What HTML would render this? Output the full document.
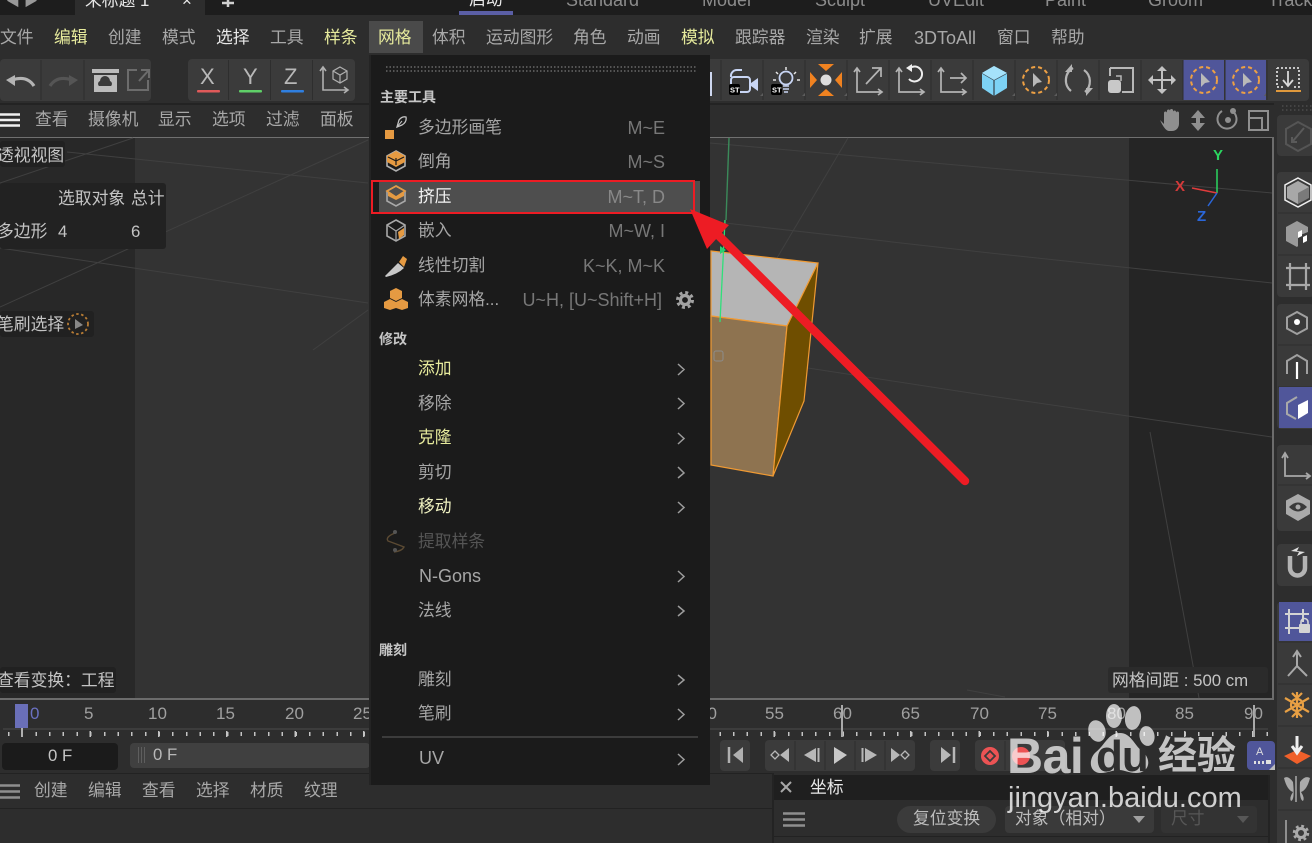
<!DOCTYPE html>
<html lang="zh"><head><meta charset="utf-8"><title>Cinema 4D</title>
<style>
html,body{margin:0;padding:0;background:#2d2d2d;}
#p{position:relative;width:1312px;height:843px;overflow:hidden;background:#2d2d2d;font-family:"Liberation Sans","Noto Sans CJK SC",sans-serif;font-size:16.8px;color:#a8a8a8;}
.b,.t,svg{position:absolute;}
.t{white-space:nowrap;line-height:20px;height:20px;margin-top:3px;}
.y{color:#e6ea9c}.w{color:#e8e8e8}
.m{font-size:16.8px;color:#a6a6a6}
.m.y{color:#e6ea9c}
.h{font-size:14px;font-weight:700;color:#c6c6c6;margin-top:0}
.s{color:#777;text-align:right;right:647px;font-size:18px}
.o{color:#c4c4c4;font-size:16.8px}
.n{color:#a0a0a0;font-size:17px;margin-top:1px}
.l{font-size:18px}
</style></head><body><div id="p">

<!-- top bar -->
<div class="b" style="left:0;top:0;width:1312px;height:15px;background:#1d1d1d"></div>
<div class="b" style="left:75px;top:0;width:130px;height:15px;background:#2d2d2d"></div>
<div class="t w" style="left:85px;top:-12px">未标题 1</div>
<div class="t w" style="left:182px;top:-12px">×</div>
<div class="t" style="left:6px;top:-12px;color:#999;font-size:14px">◀ ▶</div>
<div class="t w" style="left:469px;top:-13px">启动</div>
<div class="b" style="left:459px;top:11px;width:54px;height:4px;background:#5b5fa6"></div>
<div class="t l" style="left:566px;top:-13px;color:#8c8c8c">Standard</div>
<div class="t l" style="left:702px;top:-13px;color:#8c8c8c">Model</div>
<div class="t l" style="left:815px;top:-13px;color:#8c8c8c">Sculpt</div>
<div class="t l" style="left:928px;top:-13px;color:#8c8c8c">UVEdit</div>
<div class="t l" style="left:1045px;top:-13px;color:#8c8c8c">Paint</div>
<div class="t l" style="left:1148px;top:-13px;color:#8c8c8c">Groom</div>
<div class="t l" style="left:1268px;top:-13px;color:#8c8c8c">Track</div>

<!-- menu bar -->
<div class="b" style="left:369px;top:21px;width:54px;height:32px;background:#4a4a4a"></div>
<div class="t" style="left:0;top:25px">文件</div>
<div class="t y" style="left:54px;top:25px">编辑</div>
<div class="t" style="left:108px;top:25px">创建</div>
<div class="t" style="left:162px;top:25px">模式</div>
<div class="t w" style="left:216px;top:25px">选择</div>
<div class="t" style="left:270px;top:25px">工具</div>
<div class="t y" style="left:324px;top:25px">样条</div>
<div class="t y" style="left:378px;top:25px">网格</div>
<div class="t" style="left:432px;top:25px">体积</div>
<div class="t" style="left:486px;top:25px">运动图形</div>
<div class="t" style="left:573px;top:25px">角色</div>
<div class="t" style="left:627px;top:25px">动画</div>
<div class="t y" style="left:681px;top:25px">模拟</div>
<div class="t" style="left:735px;top:25px">跟踪器</div>
<div class="t" style="left:806px;top:25px">渲染</div>
<div class="t" style="left:859px;top:25px">扩展</div>
<div class="t l" style="left:914px;top:25px">3DToAll</div>
<div class="t" style="left:997px;top:25px">窗口</div>
<div class="t" style="left:1051px;top:25px">帮助</div>

<!-- toolbar groups -->
<div class="b" style="left:0;top:59px;width:151px;height:42px;background:#3b3b3b;border-radius:4px"></div>
<div class="b" style="left:188px;top:59px;width:167px;height:42px;background:#3b3b3b;border-radius:4px"></div>
<div class="b" style="left:700px;top:59px;width:609px;height:42px;background:#3b3b3b;border-radius:4px"></div>
<div class="b" style="left:1183px;top:60px;width:41px;height:40px;background:#50569a"></div>
<div class="b" style="left:1225px;top:60px;width:41px;height:40px;background:#50569a"></div>
<div class="t w" style="left:200px;top:64px;font-size:22px;color:#b8b8b8">X</div>
<div class="t w" style="left:243px;top:64px;font-size:22px;color:#b8b8b8">Y</div>
<div class="t w" style="left:284px;top:64px;font-size:22px;color:#b8b8b8">Z</div>

<!-- viewport header -->
<div class="b" style="left:0;top:103px;width:1274px;height:2px;background:#232323"></div>
<div class="t" style="left:35px;top:107px">查看</div>
<div class="t" style="left:88px;top:107px">摄像机</div>
<div class="t" style="left:158px;top:107px">显示</div>
<div class="t" style="left:212px;top:107px">选项</div>
<div class="t" style="left:266px;top:107px">过滤</div>
<div class="t" style="left:320px;top:107px">面板</div>

<!-- viewport -->
<div class="b" style="left:0;top:137px;width:1274px;height:563px;background:#333"></div>
<div class="b" style="left:0;top:138px;width:135px;height:561px;background:#282828"></div>
<div class="b" style="left:1129px;top:138px;width:143px;height:561px;background:#252525"></div>
<div class="b" style="left:0;top:137px;width:1274px;height:1px;background:#707070"></div>
<div class="b" style="left:0;top:698px;width:1274px;height:2px;background:#6c6c6c"></div>
<div class="b" style="left:1272px;top:137px;width:2px;height:563px;background:#6c6c6c"></div>

<svg style="left:0;top:0" width="1312" height="843" viewBox="0 0 1312 843" fill="none">
<g stroke="#404040" stroke-width="1">
<path d="M67 152L368 183M710 143L990 168L1272 193M0 248L368 303M725 223L990 253L1272 283M0 183L133 138M0 307L368 140M313 350L368 310M848 138L777 258M808 368L990 396L1272 437M967 690L1005 697M1150 432L1199 698"/>
</g>
<!-- cube -->
<path d="M711 251L818 263L787 326L711 316Z" fill="#b5b5b5" stroke="#f09a33" stroke-width="1.2"/>
<path d="M711 316L787 326L773 476L711 465Z" fill="#8e7350" stroke="#f09a33" stroke-width="1.2"/>
<path d="M787 326L818 263L804 401L773 476Z" fill="#6f4e00" stroke="#f09a33" stroke-width="1.2"/>
<path d="M729 138L726 220" stroke="#3b8a5a" stroke-width="1.4"/>
<path d="M725 220L720 322" stroke="#2fe07a" stroke-width="1.3"/>
<path d="M724 234l4 10h-7zM720 246l6 4-6 4z" fill="#28d070"/>
<rect x="714" y="351" width="9" height="10" rx="2" stroke="#8c8c8c" stroke-width="1"/>
<!-- gizmo -->
<path d="M1217 193V169" stroke="#2bd660" stroke-width="1.5"/>
<path d="M1217 193L1192 188" stroke="#e03c3c" stroke-width="1.5"/>
<path d="M1217 193L1208 206" stroke="#2a66d8" stroke-width="1.5"/>

<!-- tab plus -->
<path d="M228 0V7M222 3H234" stroke="#d0d0d0" stroke-width="2.500"/>

<!-- toolbar left icons -->
<g stroke="#2e2e2e"><path d="M41 60V100M84 60V100M228.500 60V100M270.500 60V100M312.500 60V100"/></g>
<path d="M6 80L15 75V86Z" fill="#b4b4b4"/><path d="M12 80Q27 75 34 86" stroke="#b4b4b4" stroke-width="3.200"/>
<path d="M78 80L69 75V86Z" fill="#555"/><path d="M72 80Q57 75 50 86" stroke="#555" stroke-width="3.200"/>
<path d="M92 69H119V73H92Z" fill="#bcbcbc"/><path d="M94 75H117V92H94Z" fill="#bcbcbc"/>
<path d="M99 86a3 3 0 0 1 1-5 5 5 0 0 1 10 0 3 3 0 0 1 1 5Z" fill="#3b3b3b"/>
<path d="M137 70H128V90H148V80M139 81L148 71M141 70H149V78" stroke="#6c6c6c" stroke-width="2"/>
<rect x="197" y="90" width="23" height="2.500" rx="1" fill="#e05a5a"/>
<rect x="239" y="90" width="23" height="2.500" rx="1" fill="#5fd068"/>
<rect x="281" y="90" width="23" height="2.500" rx="1" fill="#2f7fe0"/>
<path d="M323 68V90H347M320 71L323 67L326 71M344 87L348 90L344 93" stroke="#b0b0b0" stroke-width="1.600"/>
<path d="M340 67l7 4v8l-7 4-7-4v-8zM333 71l7 4 7-4M340 75v8" stroke="#b0b0b0" stroke-width="1.200"/>

<!-- toolbar right icons -->
<g stroke="#2e2e2e"><path d="M721 60V100M763 60V100M805 60V100M847 60V100M889 60V100M931 60V100M973 60V100M1015 60V100M1057 60V100M1099 60V100M1141 60V100M1183 60V100M1225 60V100M1267 60V100"/></g>
<path d="M711 72V96" stroke="#cfd8f0" stroke-width="2"/>
<!-- camera -->
<rect x="731" y="77" width="19" height="15" rx="3" stroke="#c9d6f5" stroke-width="2"/>
<path d="M751 83L758 78V91L751 86Z" fill="#c9d6f5"/><path d="M731 77a6 6 0 0 1 6-7h5" stroke="#c9d6f5" stroke-width="2"/>
<rect x="729" y="84" width="11" height="11" rx="2" fill="#000"/>
<text x="730" y="92.500" font-size="7.500" font-weight="700" fill="#fff" font-family="Liberation Sans">ST</text>
<!-- light -->
<circle cx="786" cy="78" r="6.500" stroke="#c9d6f5" stroke-width="1.800"/><path d="M783 86h6M783 89h6M784 92h4" stroke="#c9d6f5" stroke-width="1.500"/>
<path d="M786 67v3M776 72l2 2M796 72l-2 2M773 80h3M797 80h3" stroke="#e6e6e6" stroke-width="1.500"/>
<rect x="771" y="84" width="11" height="11" rx="2" fill="#000"/>
<text x="772" y="92.500" font-size="7.500" font-weight="700" fill="#fff" font-family="Liberation Sans">ST</text>
<!-- star -->
<circle cx="826" cy="80" r="5.500" fill="#ddd"/>
<path d="M818 64h16l-8 7zM818 96h16l-8-7zM810 72v16l7-8zM842 72v16l-7-8z" fill="#f08220"/>
<!-- move/rotate/scale axis -->
<g stroke="#b4b4b4" stroke-width="1.700">
<path d="M857 69V92H881M854 72L857 68L860 72M878 89L882 92L878 95M866 84L881 68M872 68H881V77"/>
<path d="M899 69V92H923M896 72L899 68L902 72M920 89L924 92L920 95"/>
<path d="M941 69V92H965M938 72L941 68L944 72M962 89L966 92L962 95M950 78H966M961 73L966 78L961 83"/>
</g>
<path d="M909 79a7.500 7.500 0 1 0 1-11" stroke="#eee" stroke-width="2"/><path d="M906 68l6-4v8z" fill="#eee"/>
<!-- cube -->
<path d="M994 66L1007 73V88L994 96L982 88V73Z" fill="#7dd2f5"/>
<path d="M982 73L994 80L1007 73M994 80V96" stroke="#3a4a55" stroke-width="1.300"/>
<path d="M994 66L1007 73L994 80L982 73Z" fill="#a5e2fb"/>
<!-- select circles -->
<defs><g id="sel"><circle r="13" stroke="#eda044" stroke-width="2" stroke-dasharray="4 3"/><path d="M-3-7L6 2L1 3L-3 7Z" fill="#b9b9b9"/></g></defs>
<use href="#sel" x="1036" y="80"/>
<use href="#sel" x="1204" y="80"/>
<use href="#sel" x="1246" y="80"/>
<!-- rotate -->
<path d="M1073 68A14 14 0 0 0 1071 91M1084 70A14 14 0 0 1 1085 92" stroke="#b4b4b4" stroke-width="2.200"/>
<path d="M1072 64V72H1065zM1086 96V88H1093z" fill="#b4b4b4"/>
<!-- scale -->
<path d="M1110 68H1133V92H1122M1110 68V76" stroke="#b8b8b8" stroke-width="2"/><rect x="1108" y="80" width="13" height="13" rx="3" fill="#c8c8c8"/><path d="M1116 76h5v5" stroke="#b8b8b8" stroke-width="1.500"/>
<!-- cross -->
<path d="M1162 69V91M1151 80H1173" stroke="#c2c2c2" stroke-width="2"/>
<path d="M1157 71L1162 66L1167 71ZM1157 89L1162 94L1167 89ZM1153 75L1148 80L1153 85ZM1171 75L1176 80L1171 85Z" fill="#c2c2c2"/>
<!-- download -->
<path d="M1277 68H1299V87H1294M1283 87H1277V68" stroke="#d8d8d8" stroke-width="1.800" stroke-dasharray="2 2"/>
<path d="M1288 71V85M1283 80L1288 86L1293 80" stroke="#d8d8d8" stroke-width="1.800"/>
<rect x="1276" y="90" width="25" height="2" fill="#e0993c"/>
<g fill="#5c5c5c"><path d="M760 96h3v-3z"/><path d="M802 96h3v-3zM844 96h3v-3zM1012 96h3v-3zM1054 96h3v-3zM1264 96h2v-3z"/></g>

<!-- vp header hamburger + icons -->
<path d="M0 114.500H20M0 120H20M0 125.500H20" stroke="#f0f0f0" stroke-width="2.600"/>
<path d="M1160 120L1164 124V113a1.500 1.500 0 0 1 3 0V111a1.500 1.500 0 0 1 3 0V110.500a1.500 1.500 0 0 1 3 0V112a1.500 1.500 0 0 1 3 0V113a1.500 1.500 0 0 1 3 0V124a7 7 0 0 1-7 7H1169Q1165 131 1160 120Z" fill="#8f8f8f"/>
<path d="M1198 110L1205 118H1200V123H1205L1198 131L1191 123H1196V118H1191Z" fill="#8f8f8f"/>
<path d="M1232 111A9.500 9.500 0 1 1 1222 111" stroke="#8f8f8f" stroke-width="2"/><circle cx="1228" cy="120" r="3" fill="#8f8f8f"/><circle cx="1233" cy="111" r="3" fill="#8f8f8f"/>
<rect x="1249" y="111" width="19" height="19" stroke="#8f8f8f" stroke-width="2"/><path d="M1249 118H1262V130" stroke="#8f8f8f" stroke-width="2"/>

<!-- right sidebar -->
<g fill="#3a3a3a"><rect x="1277" y="115" width="37" height="41" rx="4"/><rect x="1277" y="172" width="37" height="125" rx="4"/><rect x="1277" y="304" width="37" height="125" rx="4"/><rect x="1277" y="445" width="37" height="86" rx="4"/><rect x="1277" y="544" width="37" height="42" rx="4"/><rect x="1277" y="602" width="37" height="250" rx="4"/></g>
<path d="M1298 122L1311 129V144L1298 151L1286 144V129Z" stroke="#555" stroke-width="2"/><path d="M1293 141L1304 128M1292 137V142H1297" stroke="#5a5a5a" stroke-width="2"/>
<path d="M1298 178L1311 185V200L1298 207L1285 200V185Z" stroke="#eee" stroke-width="1.500"/>
<path d="M1298 181L1309 187V198L1298 204L1287 198V187Z" fill="#7a7a7a"/><path d="M1298 181L1309 187L1298 193V204L1287 198V187Z" fill="#a8a8a8"/>
<path d="M1297 221L1308 227V232L1298 236V246L1297 247L1286 241V227Z" fill="#9a9a9a"/><path d="M1298 232l4-2v6l-4 2zM1303 237l4-2v6l-4 2z" fill="#fff"/>
<path d="M1286 268H1310M1286 285H1310M1290 263V290M1306 263V290" stroke="#a8a8a8" stroke-width="2.200"/>
<g stroke="#2e2e2e"><path d="M1278 213H1312M1278 255H1312M1278 345H1312M1278 387H1312M1278 485H1312M1278 642H1312M1278 684H1312M1278 726H1312M1278 768H1312M1278 810H1312"/></g>
<defs><path id="hex" d="M0-11L10-5.500V5.500L0 11L-10 5.500V-5.500Z"/></defs>
<use href="#hex" x="1297" y="323" stroke="#a0a0a0" stroke-width="2"/><circle cx="1297" cy="322" r="3" fill="#fff"/>
<path d="M1287 374V361L1297 355L1307 361V374" stroke="#a0a0a0" stroke-width="2"/><path d="M1297 362V379" stroke="#fff" stroke-width="2.200"/>
<rect x="1279" y="387" width="35" height="41" fill="#50569a"/>
<path d="M1297 397L1287 403V414L1296 419" stroke="#a9a9a9" stroke-width="2"/><path d="M1298 405L1308 400V413L1298 419Z" fill="#fff"/>
<path d="M1285 455V476H1309M1282 458L1285 453L1288 458M1306 473L1310 476L1306 479" stroke="#a8a8a8" stroke-width="1.800"/>
<path d="M1298 494L1310 500.500V514L1298 521L1286 514V500.500Z" fill="#aaa"/><path d="M1289 507Q1298 498 1307 507Q1298 516 1289 507Z" fill="#3a3a3a"/><circle cx="1298" cy="507" r="2.500" fill="#aaa"/>
<path d="M1290 556V568a7.500 7.500 0 0 0 15 0V556" stroke="#b4b4b4" stroke-width="4.500"/><path d="M1299 552L1291 551L1299 547L1297 551L1305 552L1297 556Z" fill="#e0e0e0"/>
<rect x="1279" y="602" width="35" height="39" fill="#50569a"/>
<path d="M1285 614H1309M1285 628H1300M1289 609V634M1303 609V622" stroke="#d4d4d4" stroke-width="2"/>
<rect x="1299" y="624" width="11" height="9" rx="1" fill="#d4d4d4"/><path d="M1301 624v-2a3.500 3.500 0 0 1 7 0v2" stroke="#d4d4d4" stroke-width="1.600"/>
<path d="M1297 653V666L1288 676M1297 666L1307 676M1293 657L1297 651L1301 657" stroke="#a8a8a8" stroke-width="2"/>
<g stroke="#e8a044" stroke-width="2.200"><path d="M1297 692V718M1285 698L1309 712M1285 712L1309 698M1292 693l5 5 5-5M1292 717l5-5 5 5"/><circle cx="1297" cy="705" r="6"/></g>
<path d="M1297 750L1311 756L1297 764L1284 756Z" fill="#f0602a"/><path d="M1297 736V752M1292 746L1297 753L1302 746" stroke="#eee" stroke-width="3"/>
<path d="M1296 776V802" stroke="#aaa" stroke-width="1.500"/><path d="M1293 782Q1288 775 1284 778Q1287 790 1293 792Q1289 798 1291 801Q1295 800 1293 782ZM1300 782Q1305 775 1310 778Q1307 790 1301 792Q1305 798 1303 801Q1299 800 1300 782Z" fill="#aaa"/>
<path d="M1286 820V843" stroke="#aaa" stroke-width="1.500"/>
<circle cx="1301" cy="833" r="4.500" stroke="#aaa" stroke-width="3"/><circle cx="1301" cy="833" r="7" stroke="#aaa" stroke-width="2.500" stroke-dasharray="2.800 2.700"/>
<path d="M1282 106H1312M1282 110H1312" stroke="#5a5a5a" stroke-width="1" stroke-dasharray="1.500 2.500"/>
</svg>

<!-- viewport overlays -->
<div class="b" style="left:0;top:141px;width:65px;height:26px;background:#212121;border-radius:3px"></div>
<div class="b" style="left:0;top:183px;width:166px;height:66px;background:#222;border-radius:3px"></div>
<div class="b" style="left:0;top:311px;width:94px;height:26px;background:#212121;border-radius:3px"></div>
<div class="b" style="left:0;top:667px;width:116px;height:26px;background:#212121;border-radius:3px"></div>
<div class="b" style="left:1108px;top:667px;width:160px;height:26px;background:#2b2b2b;border-radius:3px"></div>
<div class="t o" style="left:-3px;top:143px">透视视图</div>
<div class="t o" style="left:58px;top:186px">选取对象</div>
<div class="t o" style="left:131px;top:186px">总计</div>
<div class="t o" style="left:-3px;top:219px">多边形</div>
<div class="t o" style="left:58px;top:219px">4</div>
<div class="t o" style="left:131px;top:219px">6</div>
<div class="t o" style="left:-3px;top:312px">笔刷选择</div>
<div class="t o" style="left:-3px;top:668px">查看变换：工程</div>
<div class="t o" style="left:1112px;top:668px">网格间距 : 500 cm</div>
<svg style="left:66px;top:312px" width="24" height="24" viewBox="-12 -12 24 24" fill="none"><circle r="10" stroke="#b77c35" stroke-width="1.800" stroke-dasharray="2.500 2.500"/><path d="M-3-5L5 1L-3 5Z" fill="#888"/></svg>
<div class="t" style="left:1213px;top:143px;color:#2bd660;font-size:15px;font-weight:700">Y</div>
<div class="t" style="left:1175px;top:174px;color:#d33a3a;font-size:15px;font-weight:700">X</div>
<div class="t" style="left:1197px;top:204px;color:#2a66d8;font-size:15px;font-weight:700">Z</div>

<!-- timeline -->
<div class="b" style="left:3px;top:728px;width:1265px;height:2px;background:#3c3c3c"></div>
<div class="b" style="left:8px;top:732px;width:1260px;height:4px;background:repeating-linear-gradient(90deg,#c4c4c4 0,#c4c4c4 1.500px,transparent 1.500px,transparent 13.680px)"></div>
<div class="b" style="left:21px;top:731px;width:1247px;height:6px;background:repeating-linear-gradient(90deg,#c4c4c4 0,#c4c4c4 1.500px,transparent 1.500px,transparent 68.400px)"></div>
<div class="b" style="left:15px;top:704px;width:13px;height:24px;background:#6a6fb8"></div>
<div class="b" style="left:21px;top:728px;width:2px;height:9px;background:#b0b0b0"></div>
<div class="b" style="left:841px;top:705px;width:1.500px;height:32px;background:#aaa"></div>
<div class="b" style="left:1253px;top:705px;width:1.500px;height:32px;background:#aaa"></div>
<div class="t n" style="left:30px;top:703px;color:#6a70c0">0</div>
<div class="t n" style="left:84px;top:703px">5</div>
<div class="t n" style="left:148px;top:703px">10</div>
<div class="t n" style="left:216px;top:703px">15</div>
<div class="t n" style="left:285px;top:703px">20</div>
<div class="t n" style="left:353px;top:703px">25</div>
<div class="t n" style="left:765px;top:703px">55</div>
<div class="t n" style="left:833px;top:703px">60</div>
<div class="t n" style="left:901px;top:703px">65</div>
<div class="t n" style="left:970px;top:703px">70</div>
<div class="t n" style="left:1038px;top:703px">75</div>
<div class="t n" style="left:1107px;top:703px">80</div>
<div class="t n" style="left:1175px;top:703px">85</div>
<div class="t n" style="left:1244px;top:703px">90</div>
<div class="t n" style="left:698px;top:703px">50</div>

<!-- transport -->
<div class="b" style="left:2px;top:743px;width:116px;height:27px;background:#1b1b1b;border-radius:4px"></div>
<div class="t" style="left:48px;top:743px;color:#c4c4c4">0 F</div>
<div class="b" style="left:130px;top:743px;width:240px;height:25px;background:#404040;border-radius:4px"></div>
<div class="b" style="left:138px;top:747px;width:7px;height:16px;background:repeating-linear-gradient(90deg,#5e5e5e 0,#5e5e5e 1px,transparent 1px,transparent 3px)"></div>
<div class="t" style="left:153px;top:742px;color:#b8b8b8">0 F</div>
<div class="b" style="left:0;top:773px;width:772px;height:1px;background:#222"></div>
<div class="b" style="left:720px;top:740px;width:30px;height:31px;background:#3b3b3b;border-radius:4px"></div>
<div class="b" style="left:765px;top:740px;width:150px;height:31px;background:#3b3b3b;border-radius:4px"></div>
<div class="b" style="left:930px;top:740px;width:30px;height:31px;background:#3b3b3b;border-radius:4px"></div>
<div class="b" style="left:975px;top:740px;width:90px;height:31px;background:#3b3b3b;border-radius:4px"></div>
<div class="b" style="left:1247px;top:741px;width:28px;height:29px;background:#50569a;border-radius:4px"></div>
<div class="t" style="left:1256px;top:743px;font-size:11px;color:#ddd;line-height:12px">A</div>
<svg style="left:0;top:0" width="1312" height="843" viewBox="0 0 1312 843" fill="none">
<path d="M729 747V763" stroke="#b0b0b0" stroke-width="2.500"/><path d="M743 747V763L733 755Z" fill="#b0b0b0"/>
<g stroke="#2e2e2e"><path d="M795 741V770M825 741V770M855 741V770M885 741V770M1005 741V770"/></g>
<path d="M789 748V762L780 755Z" fill="#b8b8b8"/><path d="M775 751L779 755L775 759L771 755Z" stroke="#b8b8b8" stroke-width="1.300"/>
<path d="M816 748V762L804 755Z" fill="#b8b8b8"/><path d="M818.500 748V762" stroke="#b8b8b8" stroke-width="2"/>
<path d="M834 747L847 755L834 764Z" fill="#c8c8c8"/>
<path d="M865 748V762L877 755Z" fill="#b8b8b8"/><path d="M862.500 748V762" stroke="#b8b8b8" stroke-width="2"/>
<path d="M891 748V762L900 755Z" fill="#b8b8b8"/><path d="M905 751L909 755L905 759L901 755Z" stroke="#b8b8b8" stroke-width="1.300"/>
<path d="M941 747V763L951 755Z" fill="#b8b8b8"/><path d="M954 747V763" stroke="#b8b8b8" stroke-width="2.500"/>
<circle cx="990" cy="756" r="9" fill="#ec5354"/><path d="M990 751L995 756L990 761L985 756Z" stroke="#3b3b3b" stroke-width="1.800"/>
<circle cx="1021" cy="756" r="9" fill="#ec5354"/>
<path d="M1254 761h2v3h-2zM1258 761h2v3h-2zM1262 761h2v3h-2zM1266 760h5v4h-5z" fill="#e0e0e0"/>
<path d="M1275 764v6h-6z" fill="#bbb"/>
<path d="M0 785.500H20M0 791.500H20M0 797.500H20" stroke="#8e8e8e" stroke-width="2.400"/>
<path d="M783 813.500H805M783 819.500H805M783 825.500H805" stroke="#8e8e8e" stroke-width="2.600"/>
</svg>

<!-- bottom -->
<div class="t" style="left:34px;top:778px">创建</div>
<div class="t" style="left:88px;top:778px">编辑</div>
<div class="t" style="left:142px;top:778px">查看</div>
<div class="t" style="left:196px;top:778px">选择</div>
<div class="t" style="left:250px;top:778px">材质</div>
<div class="t" style="left:304px;top:778px">纹理</div>
<div class="b" style="left:0;top:808px;width:772px;height:1px;background:#222"></div>
<div class="b" style="left:772px;top:773px;width:2px;height:70px;background:#232323"></div>
<div class="b" style="left:774px;top:775px;width:494px;height:25px;background:#1f1f1f"></div>
<div class="b" style="left:1268px;top:775px;width:2px;height:68px;background:#232323"></div>
<div class="b" style="left:774px;top:836px;width:494px;height:1px;background:#222"></div>
<svg style="left:778px;top:778px" width="16" height="18" fill="none"><path d="M3 4L13 14M13 4L3 14" stroke="#a8a8a8" stroke-width="2"/></svg>
<div class="t w" style="left:810px;top:775px">坐标</div>
<div class="b" style="left:897px;top:806px;width:99px;height:27px;background:#3b3b3b;border-radius:14px"></div>
<div class="t" style="left:913px;top:806px;color:#bcbcbc">复位变换</div>
<div class="b" style="left:1005px;top:806px;width:149px;height:27px;background:#3a3a3a;border-radius:4px"></div>
<div class="t" style="left:1015px;top:806px;color:#bcbcbc">对象（相对）</div>
<div class="b" style="left:1133px;top:816px;border:6px solid transparent;border-top:7px solid #a0a0a0"></div>
<div class="b" style="left:1161px;top:806px;width:96px;height:27px;background:#333;border-radius:4px"></div>
<div class="t" style="left:1171px;top:806px;color:#575757">尺寸</div>
<div class="b" style="left:1237px;top:816px;border:6px solid transparent;border-top:7px solid #575757"></div>

<!-- dropdown menu -->
<div class="b" style="left:371px;top:55px;width:339px;height:730px;background:#1b1b1b"></div>
<div class="b" style="left:369px;top:55px;width:2px;height:730px;background:#242424"></div>
<div class="b" style="left:386px;top:66px;width:310px;height:1.500px;background:repeating-linear-gradient(90deg,#555 0,#555 1.500px,transparent 1.500px,transparent 3.500px)"></div>
<div class="b" style="left:386px;top:70px;width:310px;height:1.500px;background:repeating-linear-gradient(90deg,#555 0,#555 1.500px,transparent 1.500px,transparent 3.500px)"></div>
<div class="t h" style="left:380px;top:87px">主要工具</div>
<div class="b" style="left:379px;top:181px;width:321px;height:32px;background:#4e4e4e"></div>
<div class="b" style="left:371px;top:180px;width:324px;height:34px;border:2px solid #ed1c24;box-sizing:border-box"></div>
<div class="t m" style="left:418px;top:115px">多边形画笔</div>
<div class="t s" style="top:115px">M~E</div>
<div class="t m" style="left:418px;top:149px">倒角</div>
<div class="t s" style="top:149px">M~S</div>
<div class="t m" style="left:418px;top:184px;color:#f4f4f4">挤压</div>
<div class="t s" style="top:184px;color:#888">M~T, D</div>
<div class="t m" style="left:418px;top:218px">嵌入</div>
<div class="t s" style="top:218px">M~W, I</div>
<div class="t m" style="left:418px;top:253px">线性切割</div>
<div class="t s" style="top:253px">K~K, M~K</div>
<div class="t m" style="left:418px;top:287px">体素网格...</div>
<div class="t s" style="top:287px;right:650px">U~H, [U~Shift+H]</div>
<div class="t h" style="left:379px;top:329px">修改</div>
<div class="t m y" style="left:418px;top:356px">添加</div>
<div class="t m" style="left:418px;top:391px">移除</div>
<div class="t m y" style="left:418px;top:425px">克隆</div>
<div class="t m" style="left:418px;top:460px">剪切</div>
<div class="t m" style="left:418px;top:494px;color:#eef0c0">移动</div>
<div class="t m" style="left:418px;top:529px;color:#555">提取样条</div>
<div class="t m l" style="left:419px;top:563px">N-Gons</div>
<div class="t m" style="left:418px;top:598px">法线</div>
<div class="t h" style="left:379px;top:640px">雕刻</div>
<div class="t m" style="left:418px;top:667px">雕刻</div>
<div class="t m" style="left:418px;top:701px">笔刷</div>
<div class="b" style="left:382px;top:736px;width:316px;height:2px;background:#3c3c3c"></div>
<div class="t m l" style="left:419px;top:745px">UV</div>

<svg style="left:0;top:0" width="1312" height="843" viewBox="0 0 1312 843" fill="none">
<!-- menu icons -->
<rect x="385" y="130" width="9" height="9" fill="#e59a42"/>
<path d="M397 127L399 120Q402 116 406 117Q407 122 402 125Z" stroke="#c4c4c4" stroke-width="1.300"/><path d="M397 127L402 121" stroke="#c4c4c4"/>
<path d="M396 151L405 156V166L396 171L387 166V156Z" stroke="#b0b0b0" stroke-width="1.600"/>
<path d="M396 151L405 156V162L396 167L387 162V156Z" fill="#e59a42"/><path d="M396 158V165M388 157L396 161L404 157" stroke="#1b1b1b" stroke-width="1.200"/>
<path d="M396 186L405 191V201L396 206L387 201V191Z" stroke="#a8a8a8" stroke-width="1.600"/>
<path d="M396 186L405 191L396 197L387 191Z" stroke="#e59a42" stroke-width="1.600"/><path d="M388 192L396 197L404 192V196L396 200L388 196Z" fill="#e59a42"/>
<path d="M396 220L405 225V236L396 241L387 236V225Z" stroke="#a8a8a8" stroke-width="1.600"/>
<path d="M387 225L396 231L405 225M396 231V241" stroke="#a8a8a8" stroke-width="1.200"/><path d="M398 232L404 228V235L399 239Z" fill="#e59a42"/>
<path d="M385 276L398 263L404 268Q398 274 386 277Z" fill="#c8c8c8"/><path d="M399 262L403 256L407 259L404 267Z" fill="#e59a42"/>
<g fill="#e59a42"><path d="M396 288L402 291V298L396 301L390 298V291Z"/><path d="M390 299L396 302V308L390 310L384 308V302Z"/><path d="M402 299L408 302V308L402 310L396 308V302Z"/></g>
<circle cx="685" cy="300" r="4.500" stroke="#a2a2a2" stroke-width="3.200"/><circle cx="685" cy="300" r="7.500" stroke="#a2a2a2" stroke-width="3" stroke-dasharray="3 2.890"/>
<path d="M395 533Q385 537 388 541Q399 545 404 547Q402 551 394 552" stroke="#5b4a33" stroke-width="1.400"/><circle cx="395" cy="532" r="2" fill="#555"/><circle cx="395" cy="550" r="2" fill="#555"/>
<g stroke="#9c9c9c" stroke-width="1.500">
<path d="M678 364L684 369.500L678 375M678 398L684 403.500L678 409M678 433L684 438.500L678 444M678 467L684 473L678 478M678 502L684 507.500L678 513M678 571L684 576.500L678 582M678 606L684 611L678 616M678 675L684 680L678 685M678 709L684 714.500L678 720M678 754L684 759.500L678 765"/>
</g>
<!-- red arrow -->
<path d="M965 481L711 228" stroke="#ed1c24" stroke-width="8.500" stroke-linecap="round"/>
<path d="M690 209L729 225L707 249Z" fill="#ed1c24"/>
<!-- baidu paw -->
<g fill="#fff" fill-opacity=".7">
<ellipse cx="1097" cy="731" rx="8.500" ry="11" transform="rotate(-18 1097 731)"/>
<ellipse cx="1114" cy="716" rx="8" ry="12"/>
<ellipse cx="1133" cy="718" rx="8" ry="12" transform="rotate(8 1133 718)"/>
<ellipse cx="1147" cy="736" rx="7.500" ry="10" transform="rotate(-10 1147 736)"/>
<path d="M1120 733C1131 733 1134 745 1142 751C1152 759 1150 773 1136 773C1128 773 1125 770 1119 770C1112 770 1108 773 1101 773C1089 773 1088 759 1096 752C1105 745 1108 733 1120 733Z"/>
</g>
</svg>
<div class="t" style="left:1007px;top:735px;font-size:50px;line-height:36px;height:36px;font-weight:700;color:rgba(255,255,255,.7);letter-spacing:-.5px">Bai</div>
<div class="t" style="left:1096px;top:736px;font-size:44px;line-height:36px;height:36px;font-weight:700;color:#2f2f2f;letter-spacing:-1px">du</div>
<div class="t" style="left:1158px;top:734px;font-size:39px;line-height:40px;height:40px;font-weight:700;color:rgba(255,255,255,.72)">经验</div>
<div class="t" style="left:1008px;top:780px;font-size:29px;line-height:30px;height:30px;color:rgba(255,255,255,.78)">jingyan.baidu.com</div>

</div></body></html>
